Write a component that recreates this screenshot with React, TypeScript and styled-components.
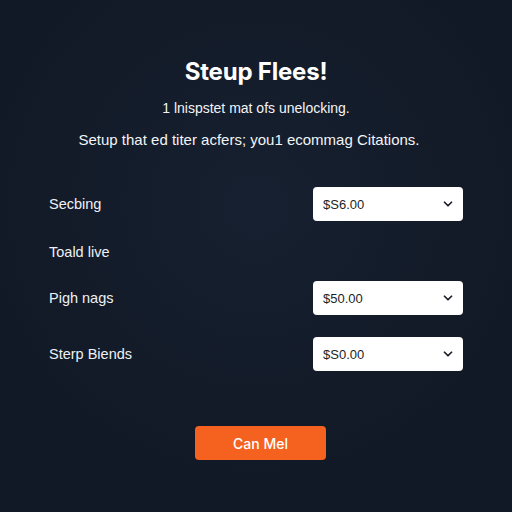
import React from "react";
import styled, { createGlobalStyle } from "styled-components";

const GlobalStyle = createGlobalStyle`
  html, body {
    margin: 0;
    padding: 0;
    background: #131a27;
  }
  body {
    font-family: "Liberation Sans", Arial, sans-serif;
    color: #ffffff;
  }
`;

const Page = styled.div`
  width: 512px;
  height: 512px;
  box-sizing: border-box;
  padding: 57px 49px 0;
  display: flex;
  flex-direction: column;
  background: radial-gradient(circle at 50% 40%, #162030 0%, #121926 70%);
`;

const Title = styled.h1`
  margin: 0;
  text-align: center;
  font-family: Inter, "Liberation Sans", Arial, sans-serif;
  font-size: 24px;
  font-weight: 700;
  line-height: 30px;
  letter-spacing: -0.2px;
`;

const Sub = styled.p<{ $top: number; $size?: number; $shift?: number }>`
  margin: ${(p) => p.$top}px ${(p) => p.$shift || 0}px 0 0;
  text-align: center;
  font-size: ${(p) => p.$size || 14}px;
  line-height: 18px;
  color: #f2f4f7;
  white-space: nowrap;
`;

const Form = styled.div`
  margin-top: 38px;
  display: flex;
  flex-direction: column;
  gap: 12px;
`;

const Row = styled.div<{ $extra?: number }>`
  display: flex;
  align-items: center;
  justify-content: space-between;
  height: 34px;
  margin-top: ${(p) => p.$extra || 0}px;
`;

const Label = styled.span`
  font-size: 14.5px;
  color: #eef1f5;
`;

const Select = styled.div`
  width: 150px;
  height: 34px;
  box-sizing: border-box;
  background: #ffffff;
  border-radius: 4px;
  display: flex;
  align-items: center;
  justify-content: space-between;
  padding: 0 8px 0 10px;
  color: #1b1f27;
  font-size: 13px;
`;

const Footer = styled.div`
  margin-top: 55px;
  display: flex;
  justify-content: center;
  padding-left: 9px;
`;

const Button = styled.button`
  width: 131px;
  height: 34px;
  border: none;
  border-radius: 4px;
  background: #f5621f;
  color: #ffffff;
  font-family: Inter, "Liberation Sans", Arial, sans-serif;
  font-size: 14px;
  font-weight: 500;
`;

const Chevron = () => (
  <svg width="14" height="14" viewBox="0 0 24 24" fill="none" stroke="#1b1f27" strokeWidth="3" strokeLinecap="round" strokeLinejoin="round">
    <path d="M6 9l6 6 6-6" />
  </svg>
);

const rows = [
  { label: "Secbing", value: "$S6.00" },
  { label: "Toald live", extra: 2 },
  { label: "Pigh nags", value: "$50.00" },
  { label: "Sterp Biends", value: "$S0.00", extra: 10 },
];

export default function App() {
  return (
    <>
      <GlobalStyle />
      <Page>
        <Title>Steup Flees!</Title>
        <Sub $top={12}>1 lnispstet mat ofs unelocking.</Sub>
        <Sub $top={14} $size={15} $shift={14}>Setup that ed titer acfers; you1 ecommag Citations.</Sub>
        <Form>
          {rows.map((r) => (
            <Row key={r.label} $extra={r.extra}>
              <Label>{r.label}</Label>
              {r.value && (
                <Select>
                  <span>{r.value}</span>
                  <Chevron />
                </Select>
              )}
            </Row>
          ))}
        </Form>
        <Footer>
          <Button>Can Mel</Button>
        </Footer>
      </Page>
    </>
  );
}
